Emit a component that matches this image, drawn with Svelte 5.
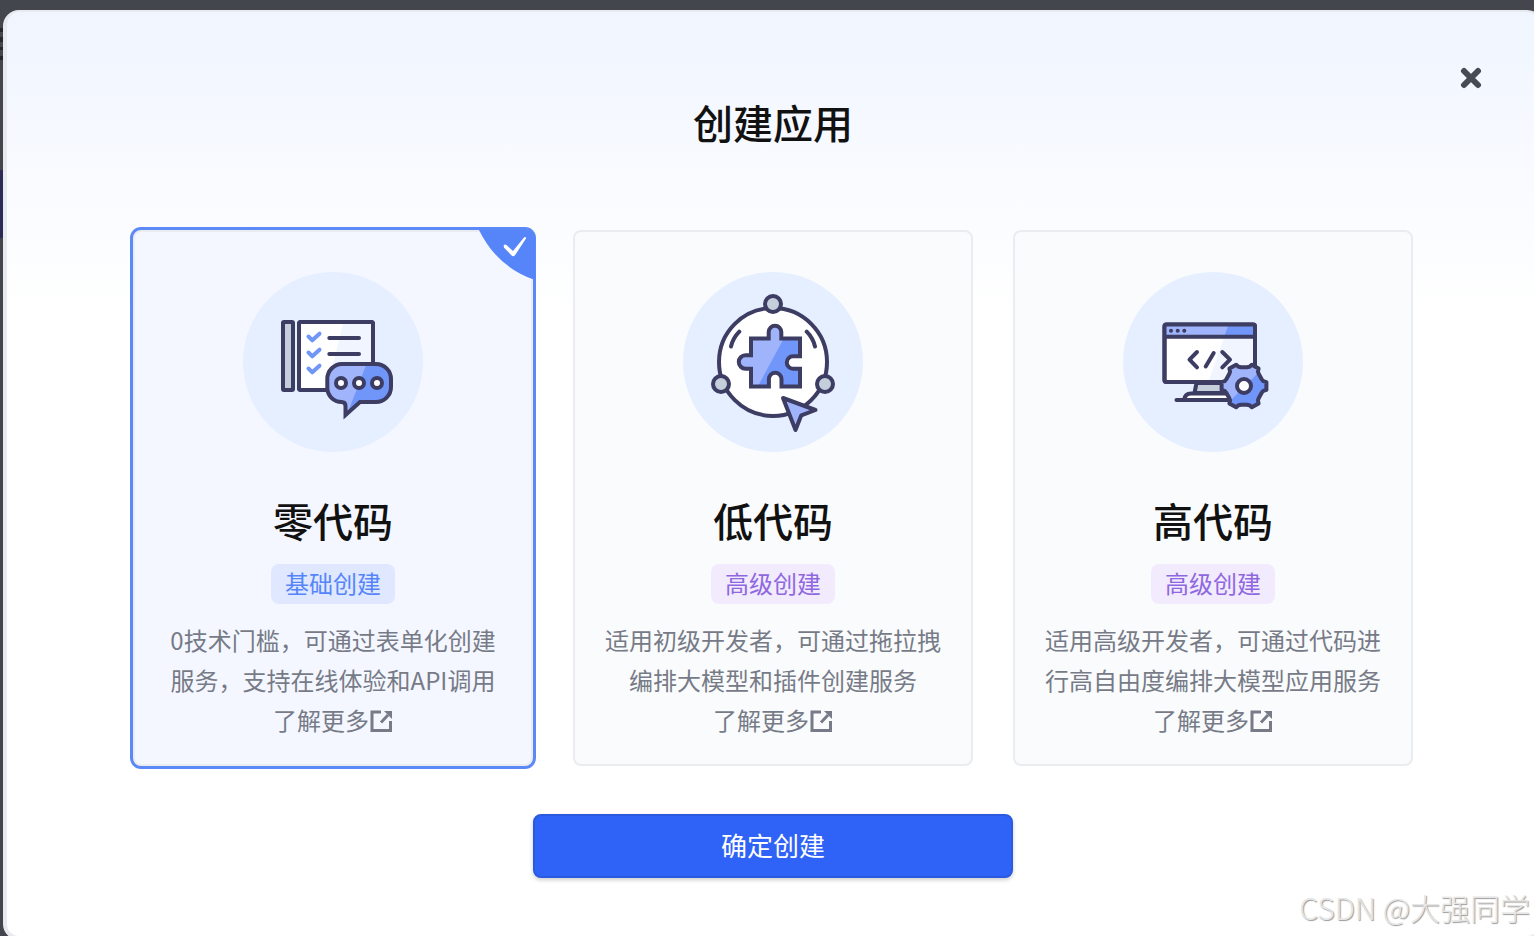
<script lang="ts">
  type AppType = {
    id: string,
    name: string,
    level: string,
    tone: string,
    text: string
  };

  const appTypes: AppType[] = [
    { id: 'zero', name: '零代码', level: '基础创建', tone: 'blue', text: '0技术门槛，可通过表单化创建服务，支持在线体验和API调用' },
    { id: 'low', name: '低代码', level: '高级创建', tone: 'purple', text: '适用初级开发者，可通过拖拉拽编排大模型和插件创建服务' },
    { id: 'high', name: '高代码', level: '高级创建', tone: 'purple', text: '适用高级开发者，可通过代码进行高自由度编排大模型应用服务' }
  ];

  let selected = $state('zero');

  const bubble = 'M99 92H133a15 15 0 0 1 15 15v8a15 15 0 0 1-15 15H117L102.5 143V134q0-4-4-4a14.2 14.2 0 0 1-14.2-14.2V107A15 15 0 0 1 99 92Z';
  const puzzle = 'M68 66.5H85.7V60a6.3 6.3 0 0 1 12.6 0V66.5H117V84.3H110a6.2 6.2 0 0 0 0 12.4H117V114.5H98.5V107a6.3 6.3 0 0 0-12.6 0V114.5H68V96.7H62.5a6.7 6.7 0 0 1 0-13.4H68Z';
  const gear = gearPath(121, 114);

  // Outline of a six-toothed gear around (cx, cy)
  function gearPath(cx: number, cy: number): string {
    const points: string[] = [];
    const add = (deg: number, r: number) => {
      const a = (deg * Math.PI) / 180;
      points.push(`${(cx + r * Math.cos(a)).toFixed(1)} ${(cy + r * Math.sin(a)).toFixed(1)}`);
    };
    for (let tooth = 0; tooth < 360; tooth += 60) {
      add(tooth - 21, 19);
      add(tooth - 14, 20);
      add(tooth - 10, 22.7);
      add(tooth + 10, 22.7);
      add(tooth + 14, 20);
      add(tooth + 21, 19);
    }
    return `M${points.join('L')}Z`;
  }
</script>

<div class="backdrop">
  <div class="dialog" role="dialog" aria-labelledby="dialog-title">
    <button class="close" type="button" aria-label="关闭">
      <svg viewBox="0 0 22 22" width="22" height="22"><path d="M4 4L18 18M18 4L4 18" /></svg>
    </button>

    <h1 id="dialog-title">创建应用</h1>

    <div class="cards">
      {#each appTypes as type}
        <div class="card" class:selected={selected === type.id}>
          <input type="radio" name="app-type" id={type.id} value={type.id} bind:group={selected} />
          <label for={type.id}>
            <svg class="picture" viewBox="0 0 180 180" aria-hidden="true">
              <circle cx="90" cy="90" r="90" fill="#e5efff" />
              {#if type.id === 'zero'}
                <clipPath id="bubble"><path d={bubble} /></clipPath>
                <g class="line">
                  <rect x="40" y="50" width="10" height="68" rx="1" fill="#c5cfdc" />
                  <rect x="56" y="50" width="74" height="68" rx="2" fill="#fff" />
                  <path d="M100 52H128V116H84Z" fill="#f0f5ff" stroke="none" />
                  <rect x="56" y="50" width="74" height="68" rx="2" />
                  <path d="M86.3 66H116M86.3 82H116" />
                  <path class="tick" d="M65.5 64.5L69.3 68.3 76.5 61.7M65.5 80.5L69.3 84.3 76.5 77.7M65.5 96.5L69.3 100.3 76.5 93.7" />
                  <g clip-path="url(#bubble)" stroke="none">
                    <path d="M80 88H152V148H80Z" fill="#9fb4fb" />
                    <path d="M125 88H152V148H102Z" fill="#7096fa" />
                  </g>
                  <path class="sharp" d={bubble} />
                  <circle cx="98" cy="111" r="5" fill="#fff" />
                  <circle cx="116" cy="111" r="5" fill="#fff" />
                  <circle cx="134" cy="111" r="5" fill="#fff" />
                </g>
              {:else if type.id === 'low'}
                <clipPath id="puzzle"><path d={puzzle} /></clipPath>
                <g class="line">
                  <circle cx="90" cy="90" r="54" fill="#fff" />
                  <circle cx="90" cy="32" r="8" fill="#c5cfdc" />
                  <circle cx="38" cy="112" r="8" fill="#c5cfdc" />
                  <circle cx="142" cy="112" r="8" fill="#c5cfdc" />
                  <path d="M56.3 59.7Q50 66 48 74.5M123.7 59.7Q130 66 132 74.5" />
                  <g clip-path="url(#puzzle)" stroke="none">
                    <path d="M50 50H120V118H50Z" fill="#9fb4fb" />
                    <path d="M101 66H120V118H73Z" fill="#7096fa" />
                  </g>
                  <path class="sharp" d={puzzle} />
                  <path d="M100 126L132.5 138 118.3 143.3 112.5 158Z" fill="#9fb4fb" />
                </g>
              {:else}
                <clipPath id="gear"><path d={gear} /></clipPath>
                <g class="line">
                  <rect x="41.5" y="52.5" width="90.5" height="57.5" rx="2" fill="#fff" />
                  <path d="M43 54H131V64H43Z" fill="#9fb4fb" stroke="none" />
                  <path d="M105 54H131V64H101.5Z" fill="#7096fa" stroke="none" />
                  <path d="M101 66H131V108H86Z" fill="#f0f5ff" stroke="none" />
                  <rect x="41.5" y="52.5" width="90.5" height="57.5" rx="2" />
                  <path d="M42 64.7H132" />
                  <g class="dots">
                    <circle cx="48" cy="58.7" r="2" />
                    <circle cx="54.7" cy="58.7" r="2" />
                    <circle cx="61.3" cy="58.7" r="2" />
                  </g>
                  <path d="M74 80L66.5 87.7 74 95.4M90.7 81L82.7 94.5M99.3 80L107 87.7 99.3 95.4" />
                  <path d="M73.5 111H104V121H71.5Z" fill="#c5cfdc" />
                  <path d="M61 128Q62 121.5 68 121.5H106V128Z" fill="#fff" />
                  <path d="M53.5 128H106" />
                  <g clip-path="url(#gear)" stroke="none">
                    <path d="M96 88H146V140H96Z" fill="#9fb4fb" />
                    <path d="M146 90V140H96Z" fill="#7096fa" />
                  </g>
                  <path d={gear} />
                  <circle cx="121" cy="114" r="7" fill="#fff" />
                </g>
              {/if}
            </svg>
            <span class="name">{type.name}</span>
            <span class="level {type.tone}">{type.level}</span>
            <span class="text">{type.text}</span>
          </label>
          <a class="more" href="#{type.id}">
            了解更多
            <svg viewBox="0 0 24 24" width="24" height="24" aria-hidden="true">
              <path d="M12 4H3V22.500H21.500V13M12 14.500L19 7" />
              <path class="head" d="M15 3H23V11Z" />
            </svg>
          </a>
          {#if selected === type.id}
            <svg class="corner" viewBox="0 0 56 50" width="56" height="50" aria-hidden="true">
              <path d="M0 0Q18 37 56 50V0Z" fill="#5685fa" />
              <path d="M24.7 15.2q1.500-1.500 3 0L34 21 45 7.500q1.200-1 2.300 0.500L36 25.200q-1.800 2-3.600 0L24.900 17.400Z" fill="#fff" />
            </svg>
          {/if}
        </div>
      {/each}
    </div>

    <button class="submit" type="button">确定创建</button>
  </div>
  <div class="watermark">CSDN @大强同学</div>
</div>

<style>
  :global(body) {
    margin: 0;
    background: #43464d;
  }

  .backdrop {
    position: relative;
    box-sizing: border-box;
    height: 100vh;
    padding: 10px 0 0 3px;
    overflow: hidden;
    font-family: "Noto Sans CJK SC", sans-serif;
    background:
      linear-gradient(
        transparent 28px, #24272c 28px, #24272c 32px,
        transparent 32px, transparent 37px, #24272c 37px, #24272c 42px,
        transparent 42px, transparent 47px, #24272c 47px, #24272c 50px,
        transparent 50px, transparent 56px, #24272c 56px, #24272c 60px,
        transparent 60px
      ),
      linear-gradient(#43464d 170px, #2b2b55 170px, #2b2b55 238px, #43464d 238px);
  }

  .dialog {
    position: relative;
    display: flex;
    flex-direction: column;
    align-items: center;
    box-sizing: border-box;
    margin-right: -9px;
    padding: 82px 60px 58px;
    border: 4px solid #e9eaef;
    border-top-width: 2px;
    border-radius: 16px;
    background: linear-gradient(#f0f5ff, #fff 300px);
  }

  .close {
    position: absolute;
    top: 55px;
    right: 57px;
    display: flex;
    padding: 0;
    border: 0;
    background: none;
    cursor: pointer;
  }

  .close path {
    fill: none;
    stroke: #474b54;
    stroke-width: 6;
    stroke-linecap: round;
  }

  h1 {
    margin: 0 0 80px;
    font-size: 40px;
    font-weight: 500;
    line-height: 56px;
    color: #111;
  }

  .cards {
    display: flex;
    justify-content: center;
    gap: 40px;
    width: 100%;
  }

  .card {
    position: relative;
    flex: 0 1 400px;
    box-sizing: border-box;
    padding: 40px 30px 24px;
    border: 2px solid #ebecf0;
    border-radius: 8px;
    background: #fafbfd;
    text-align: center;
  }

  .card.selected {
    background: #f4f7ff;
    box-shadow: 0 0 0 3px #5b89f7;
  }

  .card input {
    position: absolute;
    opacity: 0;
  }

  label {
    display: flex;
    flex-direction: column;
    align-items: center;
    cursor: pointer;
  }

  .picture {
    width: 180px;
    height: 180px;
  }

  .line {
    fill: none;
    stroke: #3d3c63;
    stroke-width: 4;
    stroke-linecap: round;
    stroke-linejoin: round;
  }

  .tick {
    stroke: #7096fa;
  }

  .sharp {
    stroke-linejoin: miter;
  }

  .dots {
    fill: #3d3c63;
    stroke: none;
  }

  .name {
    margin: 40px 0 16px;
    font-size: 40px;
    font-weight: 500;
    line-height: 56px;
    color: #111;
  }

  .level {
    padding: 0 14px 2px;
    border-radius: 8px;
    font-size: 24px;
    line-height: 38px;
  }

  .blue {
    background: #dfe8ff;
    color: #5685fa;
  }

  .purple {
    background: #f2ebfd;
    color: #8f68e0;
  }

  .text {
    margin-top: 16px;
    font-size: 24px;
    line-height: 40px;
    color: #777b87;
  }

  .more {
    display: flex;
    justify-content: center;
    align-items: center;
    font-size: 24px;
    line-height: 40px;
    color: #777b87;
    text-decoration: none;
  }

  .more path {
    fill: none;
    stroke: #777b87;
    stroke-width: 3;
  }

  .more .head {
    fill: #777b87;
    stroke: none;
  }

  .corner {
    position: absolute;
    top: -2px;
    right: -4px;
    border-top-right-radius: 8px;
  }

  .submit {
    width: 480px;
    height: 64px;
    margin-top: 48px;
    padding: 0 0 4px;
    border: 2px solid #2b59e0;
    border-radius: 8px;
    background: #2f62f6;
    box-shadow: 0 2px 4px rgba(0, 0, 0, 0.2);
    color: #fff;
    font-family: inherit;
    font-size: 26px;
    cursor: pointer;
  }

  .watermark {
    position: absolute;
    right: 4px;
    bottom: 7px;
    font-size: 30px;
    font-weight: 300;
    line-height: 44px;
    color: #e6e6e6;
    text-shadow: 1px 1px 1px #999;
  }
</style>
